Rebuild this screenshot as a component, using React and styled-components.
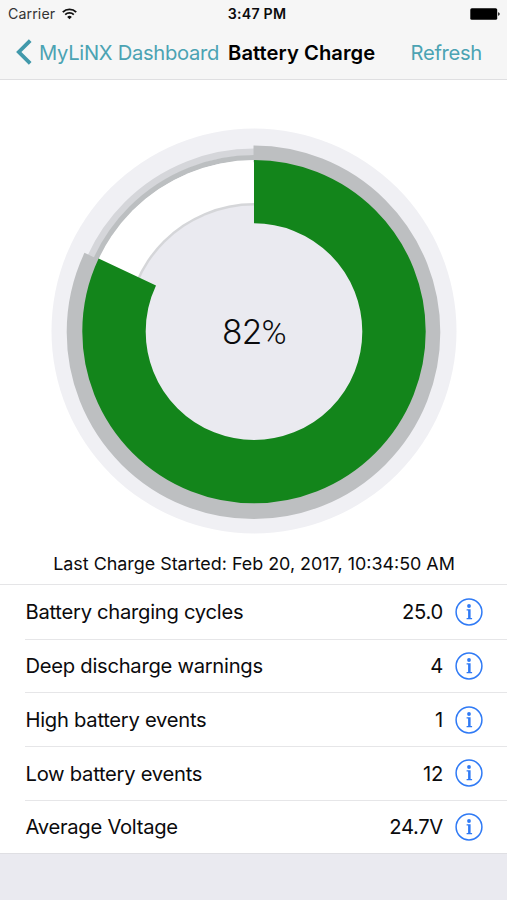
import React from "react";
import styled, { createGlobalStyle } from "styled-components";

const GlobalStyle = createGlobalStyle`
  * {
    box-sizing: border-box;
  }
  body {
    margin: 0;
    background: #eaeaf0;
    color: #0b0b0d;
    font-family: Inter, Roboto, sans-serif;
  }
`;

const Screen = styled.div`
  display: flex;
  flex-direction: column;
  width: 100%;
  height: 100vh;
  overflow: hidden;
`;

const Header = styled.header`
  height: 80px;
  background: #f6f6f6;
  border-bottom: 1px solid #dfdfe1;
`;

const StatusBar = styled.div`
  display: grid;
  grid-template-columns: 1fr auto 1fr;
  align-items: center;
  height: 27px;
  padding: 0 7px 0 8px;
  font-size: 14.2px;
`;

const Carrier = styled.div`
  display: flex;
  align-items: center;
  gap: 7px;
  letter-spacing: 0.1px;
  color: #333;
`;

const Time = styled.div`
  font-weight: 600;
  letter-spacing: 0.2px;
  padding-left: 6px;
`;

const Battery = styled.svg`
  justify-self: end;
`;

const NavBar = styled.nav`
  display: flex;
  align-items: center;
  height: 50px;
  padding: 0 25px 0 16px;
  font-size: 20.2px;
`;

const NavButton = styled.button`
  display: flex;
  align-items: center;
  gap: 7px;
  padding: 0;
  border: 0;
  background: none;
  color: #4ba3b3;
  font: inherit;
  letter-spacing: -0.3px;
  white-space: nowrap;
`;

const NavTitle = styled.h1`
  flex: 1;
  margin: 0 0 0 9px;
  font-size: 20.2px;
  font-weight: 600;
  letter-spacing: 0.05px;
  white-space: nowrap;
  color: #000;
`;

const ChargePanel = styled.section`
  display: flex;
  flex-direction: column;
  align-items: center;
  height: 505px;
  padding-top: 47px;
  background: #fff;
`;

const Chart = styled.svg`
  display: block;
  flex: none;
`;

const PercentSign = styled.tspan`
  font-family: Roboto, sans-serif;
  font-size: 34px;
`;

const LastCharge = styled.p`
  margin: 17px 0 0;
  padding-left: 1px;
  font-size: 17.9px;
  line-height: 24px;
  letter-spacing: 0;
  white-space: nowrap;
`;

const StatList = styled.ul`
  margin: 0;
  padding: 0 0 0 25px;
  list-style: none;
  background: #fff;
  box-shadow: 0 -1px 0 #e5e5e7, 0 1px 0 #dfdfe3;
`;

const StatRow = styled.li`
  display: flex;
  align-items: center;
  height: 53.65px;
  padding: 0 24px 0 0.5px;
  font-size: 20.2px;

  & + & {
    border-top: 1px solid #e6e6e8;
  }
`;

const StatLabel = styled.span`
  flex: 1;
  letter-spacing: -0.27px;
`;

const StatValue = styled.span`
  margin-right: 12px;
  letter-spacing: -0.3px;
`;

const InfoButton = styled.button`
  display: flex;
  padding: 0;
  border: 0;
  background: none;
  color: #2f7af5;
`;

const stats = [
  { label: "Battery charging cycles", value: "25.0" },
  { label: "Deep discharge warnings", value: "4" },
  { label: "High battery events", value: "1" },
  { label: "Low battery events", value: "12" },
  { label: "Average Voltage", value: "24.7V" },
];

const CENTER = 204;

function Ring({ inner, outer, color, share = 1 }) {
  return (
    <circle
      cx={CENTER}
      cy={CENTER}
      r={(inner + outer) / 2}
      fill="none"
      stroke={color}
      strokeWidth={outer - inner}
      pathLength="100"
      strokeDasharray={share < 1 ? `${share * 100} 100` : undefined}
      transform={`rotate(-90 ${CENTER} ${CENTER})`}
    />
  );
}

function ChargeChart({ percent }) {
  const share = percent / 100;
  return (
    <Chart width="408" height="408" viewBox="0 0 408 408">
      <circle cx={CENTER} cy={CENTER} r="202.5" fill="#f0f0f4" />
      <g transform="translate(0 0.6)">
        {/* empty track */}
        <Ring inner={176} outer={183} color="#d5d6da" />
        <Ring inner={171} outer={176.5} color="#bcbfc1" />
        <circle cx={CENTER} cy={CENTER} r="171.5" fill="#fff" />
        <circle cx={CENTER} cy={CENTER} r="128.5" fill="#d5d6d9" />
        <circle cx={CENTER} cy={CENTER} r="126" fill="#eaeaf0" />
      </g>
      {/* charged part */}
      <g transform="translate(-0.5 1.3)">
        <Ring inner={170} outer={186.8} color="#bdbfc1" share={share} />
      </g>
      <g transform="translate(0 0.6)">
        <Ring inner={108.3} outer={171.7} color="#13851b" share={share} />
      </g>
      <text
        x={CENTER}
        y={CENTER + 13}
        textAnchor="middle"
        fontSize="33.5"
        fontWeight="300"
        letterSpacing="-0.8"
        fill="#0b0b0d"
      >
        {percent}
        <PercentSign>%</PercentSign>
      </text>
    </Chart>
  );
}

function WifiIcon() {
  return (
    <svg width="15" height="12" viewBox="0 0 15 12" fill="none" stroke="#111">
      <path d="M0.8 4.1a9.6 9.6 0 0 1 13.4 0" strokeWidth="1.9" />
      <path d="M3.2 6.7a6.2 6.2 0 0 1 8.6 0" strokeWidth="1.8" />
      <path d="M7.5 11.3 5.2 8.9a3.4 3.4 0 0 1 4.6 0z" fill="#111" stroke="none" />
    </svg>
  );
}

function BatteryIcon() {
  return (
    <Battery width="30" height="12" viewBox="0 0 30 12">
      <rect x="0.3" y="0.2" width="26.9" height="11.6" rx="1.6" fill="#000" />
      <path d="M28 4.2c1.3.3 1.8 1 1.8 1.8s-.5 1.5-1.8 1.8z" fill="#333" />
    </Battery>
  );
}

function BackIcon() {
  return (
    <svg width="16" height="26" viewBox="0 0 16 26" fill="none">
      <path d="M14.2 1.6 2.8 13l11.4 11.4" stroke="#4199ab" strokeWidth="3.8" />
    </svg>
  );
}

function InfoIcon() {
  return (
    <svg width="28" height="28" viewBox="0 0 28 28">
      <circle cx="14" cy="14" r="12.9" fill="none" stroke="currentColor" strokeWidth="1.5" />
      <circle cx="14" cy="8" r="1.9" fill="currentColor" />
      <path
        d="M11.6 11.2h4v8.8h1.5v1.3h-5.5V20h1.5v-7.4h-1.5z"
        fill="currentColor"
      />
    </svg>
  );
}

function App() {
  return (
    <Screen>
      <GlobalStyle />
      <Header>
        <StatusBar>
          <Carrier>
            Carrier
            <WifiIcon />
          </Carrier>
          <Time>3:47 PM</Time>
          <BatteryIcon />
        </StatusBar>
        <NavBar>
          <NavButton>
            <BackIcon />
            MyLiNX Dashboard
          </NavButton>
          <NavTitle>Battery Charge</NavTitle>
          <NavButton>Refresh</NavButton>
        </NavBar>
      </Header>
      <ChargePanel>
        <ChargeChart percent={82} />
        <LastCharge>Last Charge Started: Feb 20, 2017, 10:34:50 AM</LastCharge>
      </ChargePanel>
      <StatList>
        {stats.map((stat) => (
          <StatRow key={stat.label}>
            <StatLabel>{stat.label}</StatLabel>
            <StatValue>{stat.value}</StatValue>
            <InfoButton aria-label={stat.label}>
              <InfoIcon />
            </InfoButton>
          </StatRow>
        ))}
      </StatList>
    </Screen>
  );
}

export default App;
